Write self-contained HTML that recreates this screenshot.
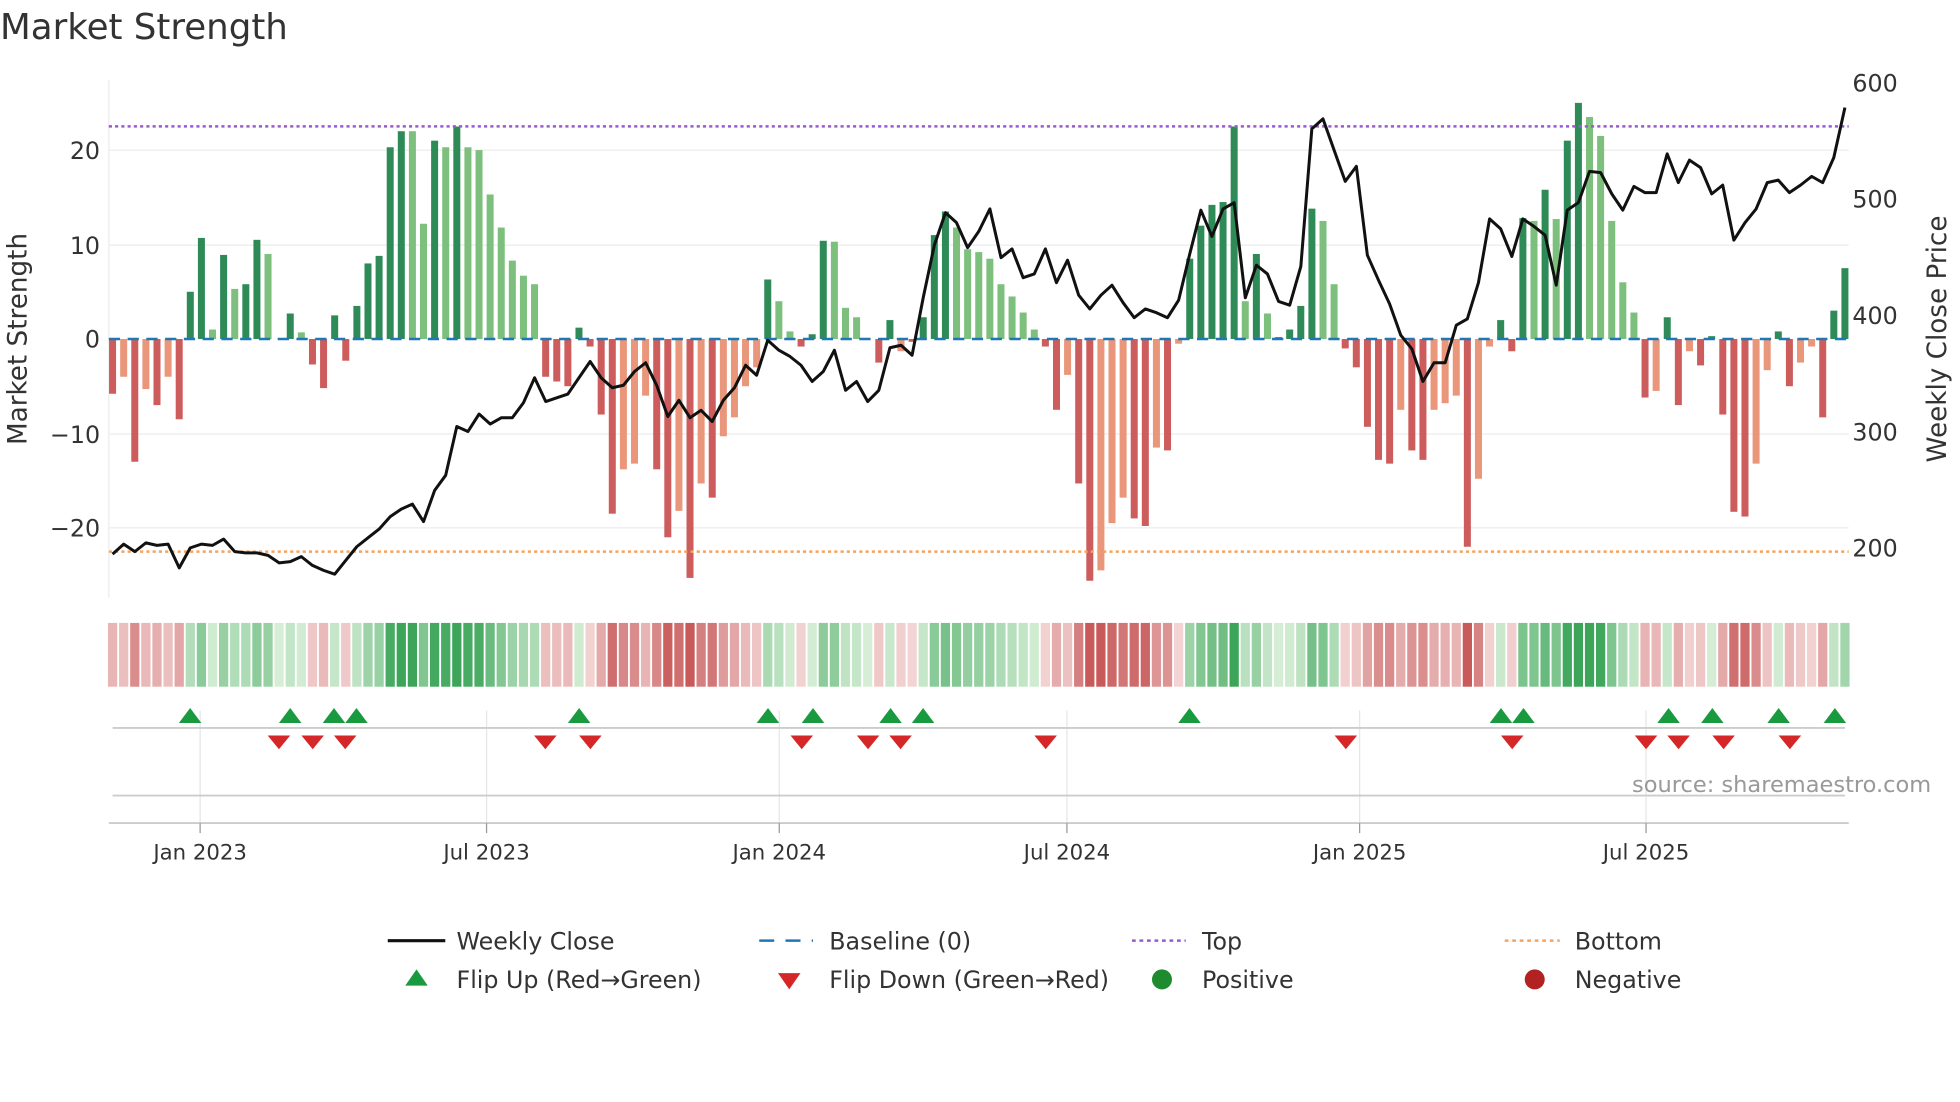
<!DOCTYPE html>
<html><head><meta charset="utf-8"><style>
html,body{margin:0;padding:0;background:#fff;}
svg{display:block;font-family:"DejaVu Sans","Liberation Sans",sans-serif;}
</style></head><body>
<svg id="s" width="1960" height="1102" viewBox="0 0 1567 881" preserveAspectRatio="none" xmlns="http://www.w3.org/2000/svg">
<text x="0" y="31" font-size="28.5" fill="#333">Market Strength</text>
<g stroke="#ececec" stroke-width="1">
<line x1="87" x2="1478" y1="120" y2="120"/><line x1="87" x2="1478" y1="196" y2="196"/><line x1="87" x2="1478" y1="347" y2="347"/><line x1="87" x2="1478" y1="422" y2="422"/>
<line x1="87" x2="87" y1="64" y2="478"/>
</g>
<g stroke="#e6e6e6"><line x1="160" x2="160" y1="568" y2="658"/><line x1="389" x2="389" y1="568" y2="658"/><line x1="623" x2="623" y1="568" y2="658"/><line x1="853" x2="853" y1="568" y2="658"/><line x1="1087" x2="1087" y1="568" y2="658"/><line x1="1316" x2="1316" y1="568" y2="658"/></g>
<g id="bars"></g>
<line x1="87" x2="1478" y1="271" y2="271" stroke="#1f77b4" stroke-width="2" stroke-dasharray="9,6"/>
<line x1="87" x2="1478" y1="101" y2="101" stroke="#9b59d0" stroke-width="2" stroke-dasharray="2.5,2.5"/>
<line x1="87" x2="1478" y1="441" y2="441" stroke="#f4a460" stroke-width="2" stroke-dasharray="2.5,2.5"/>
<polyline id="price" fill="none" stroke="#111" stroke-width="2.4" stroke-linejoin="round"/>
<g font-size="19" fill="#333" text-anchor="end">
<text x="80" y="127">20</text><text x="80" y="203">10</text><text x="80" y="278">0</text><text x="80" y="354">−10</text><text x="80" y="429">−20</text></g>
<g font-size="19" fill="#333">
<text x="1481" y="73">600</text><text x="1481" y="166">500</text><text x="1481" y="259">400</text><text x="1481" y="352">300</text><text x="1481" y="445">200</text></g>
<text transform="translate(21,271) rotate(-90)" font-size="21" fill="#333" text-anchor="middle">Market Strength</text>
<text transform="translate(1556,271) rotate(-90)" font-size="21" fill="#333" text-anchor="middle">Weekly Close Price</text>
<g id="strip"></g>
<line x1="90" x2="1475" y1="582" y2="582" stroke="#ccc" stroke-width="1.5"/>
<g id="flips"></g>
<line x1="90" x2="1475" y1="636" y2="636" stroke="#ccc" stroke-width="1.5"/>
<line x1="87" x2="1478" y1="658" y2="658" stroke="#ccc" stroke-width="1.5"/>
<text x="1544" y="633" font-size="18" fill="#999" text-anchor="end">source: sharemaestro.com</text>
<g stroke="#999"><line x1="160" x2="160" y1="658" y2="666"/><line x1="389" x2="389" y1="658" y2="666"/><line x1="623" x2="623" y1="658" y2="666"/><line x1="853" x2="853" y1="658" y2="666"/><line x1="1087" x2="1087" y1="658" y2="666"/><line x1="1316" x2="1316" y1="658" y2="666"/></g>
<g font-size="17" fill="#333" text-anchor="middle">
<text x="160" y="687">Jan 2023</text><text x="389" y="687">Jul 2023</text><text x="623" y="687">Jan 2024</text><text x="853" y="687">Jul 2024</text><text x="1087" y="687">Jan 2025</text><text x="1316" y="687">Jul 2025</text></g>
<g font-size="19" fill="#333">
<line x1="310" x2="356" y1="752" y2="752" stroke="#111" stroke-width="2.5"/><text x="365" y="759">Weekly Close</text>
<line x1="607" x2="650" y1="752" y2="752" stroke="#1f77b4" stroke-width="2" stroke-dasharray="12,9"/><text x="663" y="759">Baseline (0)</text>
<line x1="905" x2="948" y1="752" y2="752" stroke="#9b59d0" stroke-width="2" stroke-dasharray="3,3"/><text x="961" y="759">Top</text>
<line x1="1203" x2="1247" y1="752" y2="752" stroke="#f4a460" stroke-width="2" stroke-dasharray="3,3"/><text x="1259" y="759">Bottom</text>
<polygon points="324,788 342,788 333,775" fill="#1a9a3e"/><text x="365" y="790">Flip Up (Red→Green)</text>
<polygon points="622,778 640,778 631,791" fill="#d62728"/><text x="663" y="790">Flip Down (Green→Red)</text>
<circle cx="929" cy="783" r="8" fill="#1e8c2e"/><text x="961" y="790">Positive</text>
<circle cx="1227" cy="783" r="8" fill="#b22222"/><text x="1259" y="790">Negative</text>
</g>
</svg>
<script>
var V=[[-5.8,0],[-4,1],[-13,0],[-5.3,1],[-7,0],[-4,1],[-8.5,0],[5,0],[10.7,0],[1,1],[8.9,0],[5.3,1],[5.8,0],[10.5,0],[9,1],[0,0],[2.7,0],[0.7,1],[-2.7,0],[-5.2,0],[2.5,0],[-2.3,0],[3.5,0],[8,0],[8.8,0],[20.3,0],[22,0],[22,1],[12.2,1],[21,0],[20.3,1],[22.5,0],[20.3,1],[20,1],[15.3,1],[11.8,1],[8.3,1],[6.7,1],[5.8,1],[-4,0],[-4.5,0],[-5,0],[1.2,0],[-0.8,0],[-8,0],[-18.5,0],[-13.8,1],[-13.2,1],[-6,1],[-13.8,0],[-21,0],[-18.2,1],[-25.3,0],[-15.3,1],[-16.8,0],[-10.3,1],[-8.3,1],[-5,1],[-3,1],[6.3,0],[4,1],[0.8,1],[-0.8,0],[0.5,0],[10.4,0],[10.3,1],[3.3,1],[2.3,1],[0,0],[-2.5,0],[2,0],[-1.3,1],[-0.3,0],[2.3,0],[11,0],[13.5,0],[11.8,1],[9.5,1],[9.2,1],[8.5,1],[5.8,1],[4.5,1],[2.8,1],[1,1],[-0.8,0],[-7.5,0],[-3.8,1],[-15.3,0],[-25.6,0],[-24.5,1],[-19.5,1],[-16.8,1],[-19,0],[-19.8,0],[-11.5,1],[-11.8,0],[-0.5,1],[8.5,0],[12,0],[14.2,0],[14.5,0],[22.5,0],[4,1],[9,0],[2.7,1],[0.2,0],[1,0],[3.5,0],[13.8,0],[12.5,1],[5.8,1],[-1,0],[-3,0],[-9.3,0],[-12.8,0],[-13.2,0],[-7.5,1],[-11.8,0],[-12.8,0],[-7.5,1],[-6.8,1],[-6,1],[-22,0],[-14.8,1],[-0.8,1],[2,0],[-1.3,0],[12.8,0],[12.5,1],[15.8,0],[12.7,1],[21,0],[25,0],[23.5,1],[21.5,1],[12.5,1],[6,1],[2.8,1],[-6.2,0],[-5.5,1],[2.3,0],[-7,0],[-1.3,1],[-2.8,0],[0.3,0],[-8,0],[-18.3,0],[-18.8,0],[-13.2,1],[-3.3,1],[0.8,0],[-5,0],[-2.5,1],[-0.8,1],[-8.3,0],[3,0],[7.5,0]];
var P=[443,435,441,434,436,435,454,438,435,436,431,441,442,442,444,450,449,445,452,456,459,448,437,430,423,413,407,403,417,392,380,341,345,331,339,334,334,322,302,321,318,315,302,289,302,310,308,297,290,308,333,320,334,328,337,320,310,292,300,272,280,285,292,305,297,280,312,305,321,312,278,276,284,238,196,170,178,198,185,167,206,199,222,219,199,226,208,236,247,236,228,242,254,247,250,254,240,203,168,189,167,162,238,212,219,241,244,213,103,95,120,145,133,204,224,243,268,279,305,290,290,260,255,226,175,183,205,175,181,188,228,168,162,137,138,155,168,149,154,154,123,146,128,134,155,148,192,178,167,146,144,154,148,141,146,126,86];
var NS="http://www.w3.org/2000/svg",n=V.length,step=(1475-90)/(n-1);
function el(t,a,p){var e=document.createElementNS(NS,t);for(var k in a)e.setAttribute(k,a[k]);p.appendChild(e);return e;}
function mix(a,b,t){return "rgb("+a.map(function(c,i){return Math.round(c+(b[i]-c)*t)}).join(",")+")";}
var bars=document.getElementById("bars"),strip=document.getElementById("strip"),pts=[];
for(var i=0;i<n;i++){var x=90+i*step,v=V[i][0],l=V[i][1];
 var c=v>=0?(l?"#7dbf7d":"#2e8b57"):(l?"#e9967a":"#cd5c5c");
 var h=Math.abs(v)*7.55;
 if(h>0.3)el("rect",{x:x-2.8,y:v>=0?271-h:271,width:5.6,height:h,fill:c},bars);
 var t=Math.min(Math.abs(v)/22,1);
 var sc=v>=0?mix([214,238,214],[60,165,90],t):mix([244,214,214],[200,90,90],t);
 el("rect",{x:x-3.7,y:498,width:7.4,height:51,fill:sc},strip);
 pts.push(x.toFixed(1)+","+(P[i]||P[P.length-1]));}
document.getElementById("price").setAttribute("points",pts.join(" "));
var f=document.getElementById("flips");
[152,232,267,285,463,614,650,712,738,951,1200,1218,1334,1369,1422,1467].forEach(function(x){el("polygon",{points:(x-9)+",578 "+(x+9)+",578 "+x+",566",fill:"#1a9a3e"},f);});
[223,250,276,436,472,641,694,720,836,1076,1209,1316,1342,1378,1431].forEach(function(x){el("polygon",{points:(x-9)+",588 "+(x+9)+",588 "+x+",599",fill:"#d62728"},f);});
</script>
</body></html>
